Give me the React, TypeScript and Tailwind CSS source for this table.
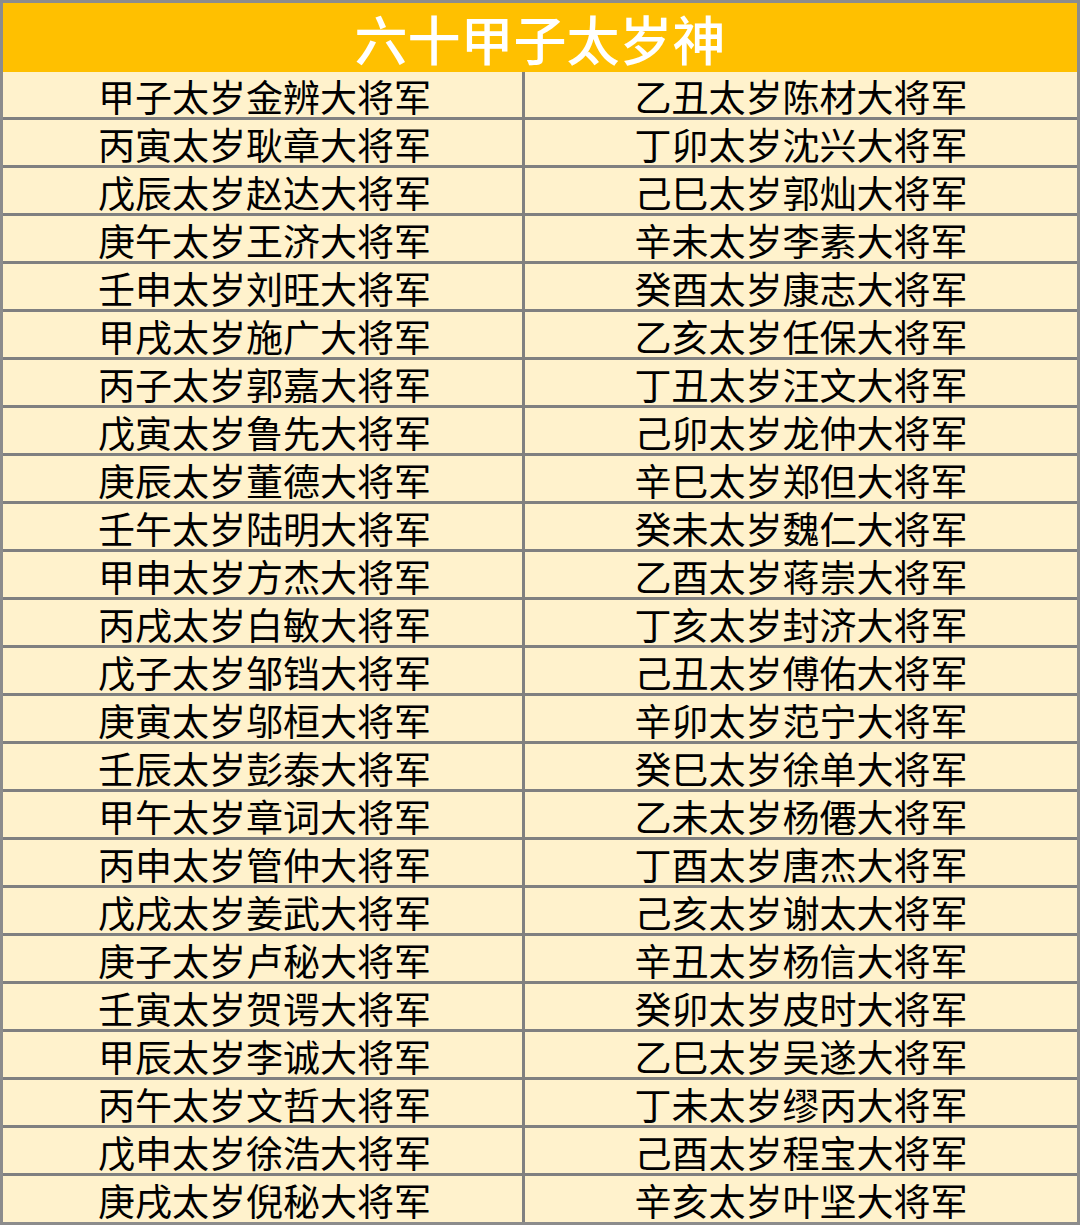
const rows: [string, string][] = [
  ["甲子太岁金辨大将军", "乙丑太岁陈材大将军"],
  ["丙寅太岁耿章大将军", "丁卯太岁沈兴大将军"],
  ["戊辰太岁赵达大将军", "己巳太岁郭灿大将军"],
  ["庚午太岁王济大将军", "辛未太岁李素大将军"],
  ["壬申太岁刘旺大将军", "癸酉太岁康志大将军"],
  ["甲戌太岁施广大将军", "乙亥太岁任保大将军"],
  ["丙子太岁郭嘉大将军", "丁丑太岁汪文大将军"],
  ["戊寅太岁鲁先大将军", "己卯太岁龙仲大将军"],
  ["庚辰太岁董德大将军", "辛巳太岁郑但大将军"],
  ["壬午太岁陆明大将军", "癸未太岁魏仁大将军"],
  ["甲申太岁方杰大将军", "乙酉太岁蒋崇大将军"],
  ["丙戌太岁白敏大将军", "丁亥太岁封济大将军"],
  ["戊子太岁邹铛大将军", "己丑太岁傅佑大将军"],
  ["庚寅太岁邬桓大将军", "辛卯太岁范宁大将军"],
  ["壬辰太岁彭泰大将军", "癸巳太岁徐单大将军"],
  ["甲午太岁章词大将军", "乙未太岁杨僊大将军"],
  ["丙申太岁管仲大将军", "丁酉太岁唐杰大将军"],
  ["戊戌太岁姜武大将军", "己亥太岁谢太大将军"],
  ["庚子太岁卢秘大将军", "辛丑太岁杨信大将军"],
  ["壬寅太岁贺谔大将军", "癸卯太岁皮时大将军"],
  ["甲辰太岁李诚大将军", "乙巳太岁吴遂大将军"],
  ["丙午太岁文哲大将军", "丁未太岁缪丙大将军"],
  ["戊申太岁徐浩大将军", "己酉太岁程宝大将军"],
  ["庚戌太岁倪秘大将军", "辛亥太岁叶坚大将军"],
];

export default function App() {
  return (
    <div
      className="w-[1080px] h-[1225px] bg-[#fff2cc] border-[3px] border-[#8c8c8c] flex flex-col overflow-hidden"
      style={{ fontFamily: '"Noto Sans CJK SC", "Noto Sans", sans-serif' }}
    >
      <div className="h-[69px] shrink-0 bg-[#ffc000] flex items-center justify-center text-white text-[53px] leading-none font-medium pt-[2px]">
        六十甲子太岁神
      </div>
      {rows.map(([left, right], i) => {
        const last = i === rows.length - 1;
        return (
          <div
            key={i}
            className={
              last
                ? "h-[46px] shrink-0 grid grid-cols-[522px_1fr]"
                : "h-[48px] shrink-0 grid grid-cols-[522px_1fr] border-b-[3px] border-[#808080]"
            }
          >
            <div className="flex items-center justify-center border-r-[3px] border-[#808080] text-[37px] leading-none text-black pt-[3px] pl-[4px]">
              {left}
            </div>
            <div className="flex items-center justify-center text-[37px] leading-none text-black pt-[3px]">
              {right}
            </div>
          </div>
        );
      })}
    </div>
  );
}
